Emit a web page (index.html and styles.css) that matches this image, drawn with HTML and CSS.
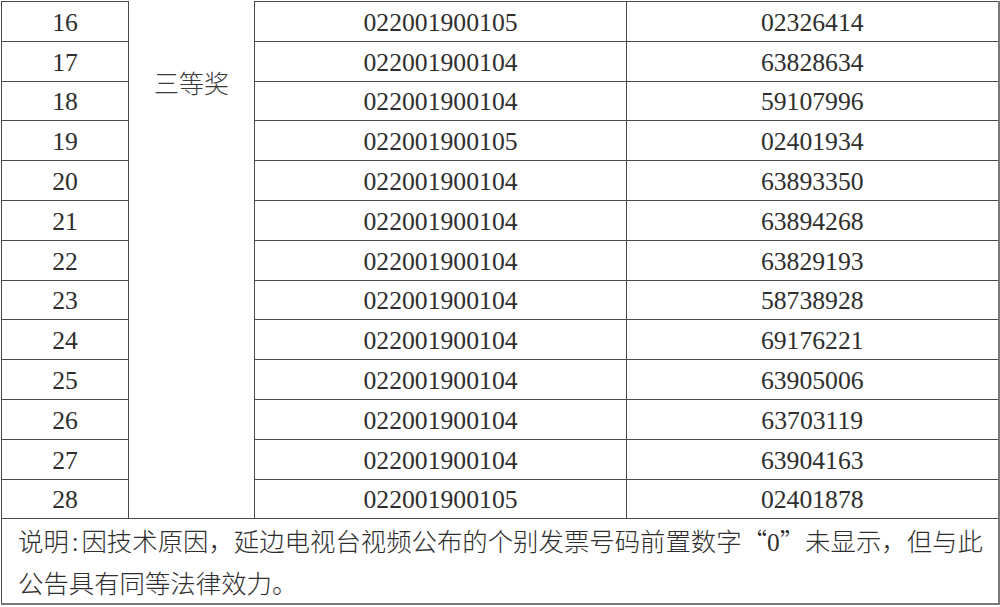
FILE: index.html
```html
<!DOCTYPE html>
<html lang="zh-CN">
<head>
<meta charset="utf-8">
<title>中奖发票号码</title>
<link rel="stylesheet" href="styles.css">
</head>
<body>
<table class="sheet">
  <colgroup>
    <col class="c-no">
    <col class="c-prize">
    <col class="c-code">
    <col class="c-num">
  </colgroup>
  <tbody>
    <tr class="row first"><td>16</td><td class="prize" rowspan="13">三等奖</td><td>022001900105</td><td>02326414</td></tr>
    <tr class="row"><td>17</td><td>022001900104</td><td>63828634</td></tr>
    <tr class="row"><td>18</td><td>022001900104</td><td>59107996</td></tr>
    <tr class="row"><td>19</td><td>022001900105</td><td>02401934</td></tr>
    <tr class="row"><td>20</td><td>022001900104</td><td>63893350</td></tr>
    <tr class="row"><td>21</td><td>022001900104</td><td>63894268</td></tr>
    <tr class="row"><td>22</td><td>022001900104</td><td>63829193</td></tr>
    <tr class="row"><td>23</td><td>022001900104</td><td>58738928</td></tr>
    <tr class="row"><td>24</td><td>022001900104</td><td>69176221</td></tr>
    <tr class="row"><td>25</td><td>022001900104</td><td>63905006</td></tr>
    <tr class="row"><td>26</td><td>022001900104</td><td>63703119</td></tr>
    <tr class="row"><td>27</td><td>022001900104</td><td>63904163</td></tr>
    <tr class="row"><td>28</td><td>022001900105</td><td>02401878</td></tr>
    <tr class="note-row">
      <td class="note" colspan="4">说明<span class="half">:</span>因技术原因，延边电视台视频公布的个别发票号码前置数字“<span class="half digit">0</span>”未显示，但与此<br>公告具有同等法律效力。</td>
    </tr>
  </tbody>
</table>
</body>
</html>
```

FILE: styles.css
```css
html, body {
  margin: 0;
  padding: 0;
  background: #ffffff;
}

.sheet {
  margin: 1px 0 0 1px;
  border-collapse: collapse;
  table-layout: fixed;
  width: 997px;
  color: #2e2e2e;
  font-family: "Liberation Serif", "Noto Sans CJK SC", serif;
  font-size: 25.7px;
}

.c-no { width: 127px; }
.c-prize { width: 126px; }
.c-code { width: 372px; }
.c-num { width: 372px; }

.sheet td {
  border: 1px solid #4a4a4a;
  padding: 3px 0 0 0;
  text-align: center;
  vertical-align: middle;
  line-height: 30px;
}

.row {
  height: 39.8px;
}

.sheet td:last-child {
  border-right: 2px solid #7a7a7a;
}

.sheet td.prize {
  border-top: none;
  border-right: 1px solid #4a4a4a;
  vertical-align: top;
  padding-top: 65px;
  font-family: "Noto Sans CJK SC", sans-serif;
  font-weight: 300;
  font-size: 25px;
  color: #3a3a3a;
}

.note-row {
  height: 85px;
}

.sheet td.note {
  border-bottom: 2px solid #7a7a7a;
  text-align: left;
  vertical-align: top;
  padding: 1px 0 0 16px;
  line-height: 40px;
  font-family: "Noto Sans CJK SC", sans-serif;
  font-weight: 300;
  font-size: 25.4px;
  color: #2e2e2e;
}

.half {
  display: inline-block;
  width: 0.5em;
  text-align: center;
}

.digit {
  font-family: "Liberation Serif", serif;
  font-weight: 400;
}
```
